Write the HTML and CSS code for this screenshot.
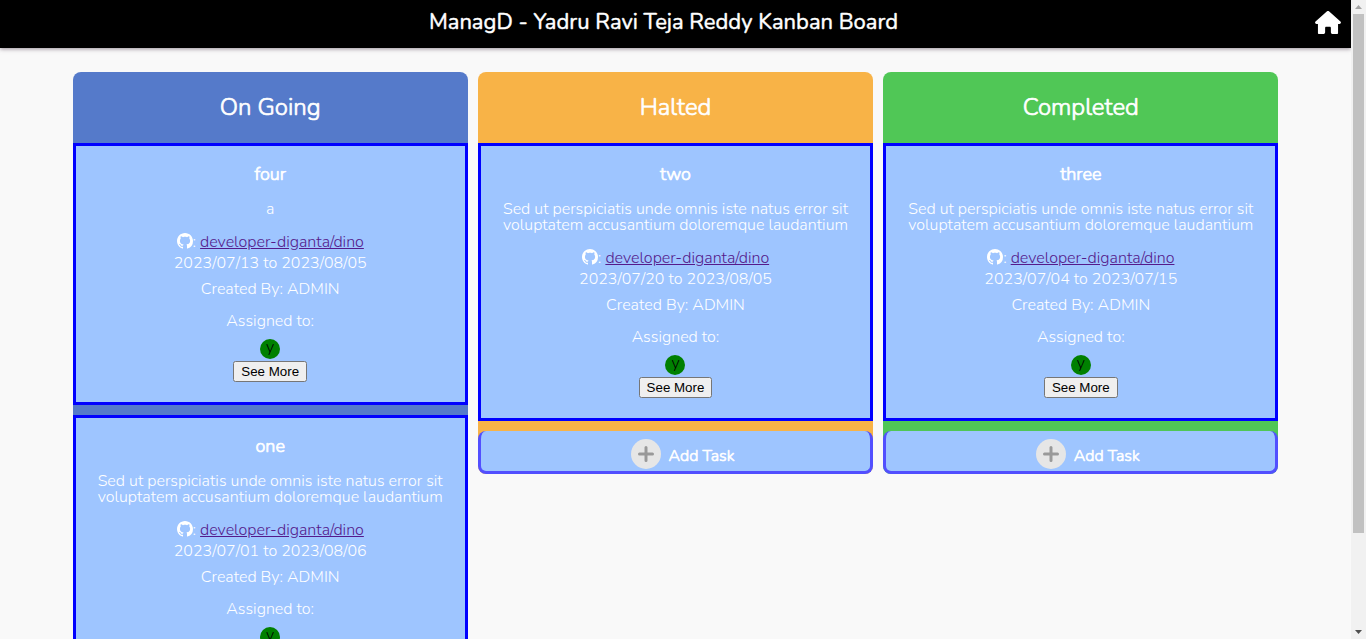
FILE: index.html
```html
<!DOCTYPE html>
<html lang="en">
<head>
<meta charset="utf-8">
<title>ManagD</title>
<link rel="stylesheet" href="styles.css">
</head>
<body>
<svg class="sprite" aria-hidden="true">
  <symbol id="github" viewBox="0 0 16 16"><path fill="currentColor" d="M8 0C3.58 0 0 3.58 0 8c0 3.54 2.29 6.53 5.47 7.59.4.07.55-.17.55-.38 0-.19-.01-.82-.01-1.49-2.01.37-2.53-.49-2.69-.94-.09-.23-.48-.94-.82-1.13-.28-.15-.68-.52-.01-.53.63-.01 1.08.58 1.23.82.72 1.21 1.87.87 2.33.66.07-.52.28-.87.51-1.07-1.78-.2-3.64-.89-3.64-3.95 0-.87.31-1.59.82-2.15-.08-.2-.36-1.02.08-2.12 0 0 .67-.21 2.2.82.64-.18 1.32-.27 2-.27s1.36.09 2 .27c1.53-1.04 2.2-.82 2.2-.82.44 1.1.16 1.92.08 2.12.51.56.82 1.27.82 2.15 0 3.07-1.87 3.75-3.65 3.95.29.25.54.73.54 1.48 0 1.07-.01 1.93-.01 2.2 0 .21.15.46.55.38A8.01 8.01 0 0 0 16 8c0-4.42-3.58-8-8-8z"/></symbol>
  <symbol id="plus" viewBox="0 0 30 30"><circle cx="15" cy="15" r="15" fill="#e6e6e6"/><path d="M15 8.500v13M8.500 15h13" stroke="#999" stroke-width="3" stroke-linecap="round"/></symbol>
</svg>
<div class="app">
  <div class="page">
    <header class="topbar">
      <h1 class="topbar-title">ManagD - Yadru Ravi Teja Reddy Kanban Board</h1>
      <a class="home" href="#" aria-label="Home"><svg class="home-icon" viewBox="0 0 576 512"><path fill="currentColor" d="M575.800 255.500c0 18-15 32.100-32 32.100h-32v200c0 14-10 24-24 24H392c-22.100 0-40-17.900-40-40V376c0-13-10-24-24-24h-80c-14 0-24 11-24 24v96c0 22.100-17.900 40-40 40H88c-14 0-24-10-24-24V287.600H32c-18 0-32-14-32-32.100 0-9 3-17 10-24L266.400 8c7-7 15-8 22-8s15 2 21 7l255.400 224.500c8 7 12 15 11 24z"/></svg></a>
    </header>
    <main class="board">
      <section class="column ongoing">
        <h2 class="column-title">On Going</h2>
        <article class="card">
          <h3 class="card-title">four</h3>
          <p class="description">a</p>
          <div class="repo"><svg class="github"><use href="#github"/></svg>: <a class="repo-link" href="#">developer-diganta/dino</a></div>
          <div class="dates">2023/07/13 to 2023/08/05</div>
          <div class="creator">Created By: ADMIN</div>
          <div class="assigned">Assigned to:</div>
          <div class="avatar">y</div>
          <button class="more" type="button">See More</button>
        </article>
        <article class="card">
          <h3 class="card-title">one</h3>
          <p class="description">Sed ut perspiciatis unde omnis iste natus error sit voluptatem accusantium doloremque laudantium</p>
          <div class="repo"><svg class="github"><use href="#github"/></svg>: <a class="repo-link" href="#">developer-diganta/dino</a></div>
          <div class="dates">2023/07/01 to 2023/08/06</div>
          <div class="creator">Created By: ADMIN</div>
          <div class="assigned">Assigned to:</div>
          <div class="avatar">y</div>
          <button class="more" type="button">See More</button>
        </article>
      </section>
      <section class="column halted">
        <h2 class="column-title">Halted</h2>
        <article class="card">
          <h3 class="card-title">two</h3>
          <p class="description">Sed ut perspiciatis unde omnis iste natus error sit voluptatem accusantium doloremque laudantium</p>
          <div class="repo"><svg class="github"><use href="#github"/></svg>: <a class="repo-link" href="#">developer-diganta/dino</a></div>
          <div class="dates">2023/07/20 to 2023/08/05</div>
          <div class="creator">Created By: ADMIN</div>
          <div class="assigned">Assigned to:</div>
          <div class="avatar">y</div>
          <button class="more" type="button">See More</button>
        </article>
        <button class="add" type="button"><svg class="plus"><use href="#plus"/></svg><span class="add-label">Add Task</span></button>
      </section>
      <section class="column completed">
        <h2 class="column-title">Completed</h2>
        <article class="card">
          <h3 class="card-title">three</h3>
          <p class="description">Sed ut perspiciatis unde omnis iste natus error sit voluptatem accusantium doloremque laudantium</p>
          <div class="repo"><svg class="github"><use href="#github"/></svg>: <a class="repo-link" href="#">developer-diganta/dino</a></div>
          <div class="dates">2023/07/04 to 2023/07/15</div>
          <div class="creator">Created By: ADMIN</div>
          <div class="assigned">Assigned to:</div>
          <div class="avatar">y</div>
          <button class="more" type="button">See More</button>
        </article>
        <button class="add" type="button"><svg class="plus"><use href="#plus"/></svg><span class="add-label">Add Task</span></button>
      </section>
    </main>
  </div>
  <div class="scrollbar" aria-hidden="true">
    <svg class="arrow" viewBox="0 0 15 14"><path fill="#a3a3a3" d="M4 9h7L7.500 5z"/></svg>
    <div class="track"><div class="thumb"></div></div>
    <svg class="arrow" viewBox="0 0 15 14"><path fill="#505050" d="M4 5h7L7.500 9z"/></svg>
  </div>
</div>
</body>
</html>
```
FILE: styles.css
```css
* { box-sizing: border-box; }
body {
  margin: 0;
  background: #f9f9f9;
  color: #fff;
  font-family: Nunito, Lato, "Open Sans", sans-serif;
  font-size: 16px;
  font-weight: 300;
  line-height: 18px;
}
.sprite { display: none; }
.app { display: flex; height: 100vh; }
.page { flex: 1; min-width: 0; overflow: hidden; }
.topbar {
  display: flex;
  align-items: center;
  height: 48px;
  padding: 0 10px 4px 12px;
  background: #000;
  box-shadow: 0 1px 4px rgba(60, 40, 60, 0.5);
}
.topbar-title {
  flex: 1;
  margin: 0;
  text-align: center;
  font-size: 22px;
  font-weight: 400;
  line-height: 32px;
  -webkit-text-stroke: 0.02em;
}
.home { display: flex; color: #fff; }
.home-icon { width: 26px; height: 23px; }
.board {
  display: flex;
  align-items: flex-start;
  gap: 10px;
  width: 90%;
  margin: 24px auto 0;
  padding: 0 5px;
}
.column { flex: 1; min-width: 0; border-radius: 8px; }
.ongoing { background: #557aca; }
.halted { background: #f8b347; }
.completed { background: #50c756; }
.column-title {
  margin: 0;
  padding: 19px 0 20px;
  text-align: center;
  font-size: 24px;
  font-weight: 300;
  line-height: 32px;
  -webkit-text-stroke: 0.03em;
}
.card {
  display: flex;
  flex-direction: column;
  align-items: center;
  margin-bottom: 10px;
  padding: 17px 20px 20px;
  border: 3px solid #00f;
  background: #9ec5ff;
  text-align: center;
}
.card-title {
  margin: 0 0 16px;
  font-size: 18px;
  font-weight: 300;
  line-height: 22px;
  -webkit-text-stroke: 0.04em;
}
.description { margin: 0 0 16px; line-height: 16px; }
.repo { display: flex; margin-bottom: 3px; white-space: pre; }
.github { width: 16px; height: 16px; }
.repo-link { color: #551a8b; }
.dates { margin-bottom: 8px; }
.creator { margin-bottom: 14px; }
.assigned { margin-bottom: 9px; }
.avatar {
  width: 20px;
  height: 20px;
  margin-bottom: 2px;
  border-radius: 50%;
  background: #008000;
  color: #000;
  line-height: 16px;
}
.add {
  display: flex;
  align-items: center;
  justify-content: center;
  gap: 8px;
  width: 100%;
  padding: 8px 0 2px 14px;
  border: 3px solid #524fff;
  border-top: 0;
  border-radius: 8px;
  background: #9ec5ff;
  color: #fff;
  font: 300 16px/18px Nunito, Lato, "Open Sans", sans-serif;
  -webkit-text-stroke: 0.04em;
}
.add-label { padding-top: 3px; }
.plus { width: 30px; height: 30px; }
.scrollbar { display: flex; flex-direction: column; width: 15px; background: #f1f1f1; }
.arrow { width: 15px; height: 14px; }
.track { flex: 1; padding: 0 2px; }
.thumb { height: 85%; background: #c1c1c1; }
```
